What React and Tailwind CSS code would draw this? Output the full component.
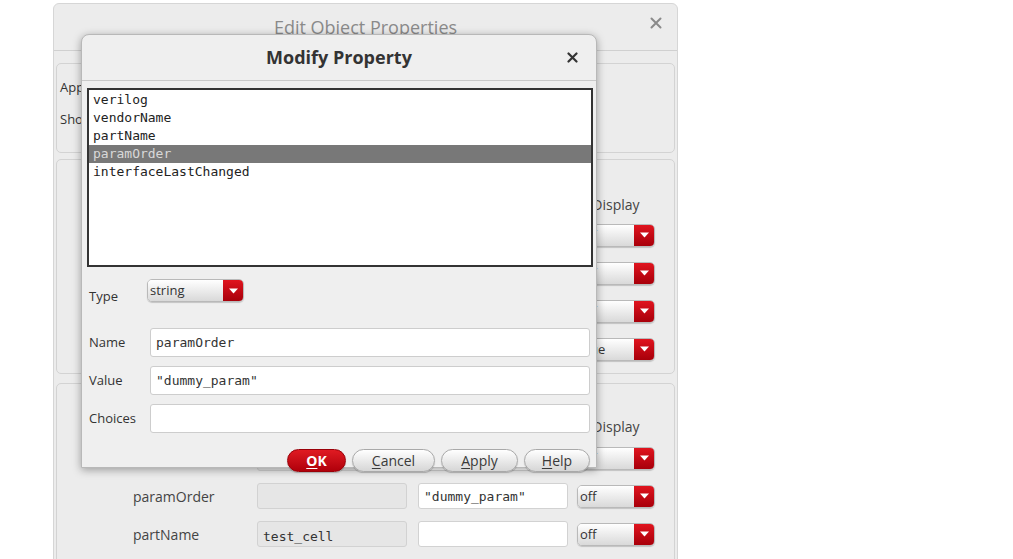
import React from "react";

const sans = "font-['Open_Sans','Noto_Sans',sans-serif]";
const mono = "font-['DejaVu_Sans_Mono',monospace]";

function Arrow() {
  return (
    <svg width="9" height="6" viewBox="0 0 9 6">
      <path d="M0 0.5h9L4.5 5.5z" fill="#fff" />
    </svg>
  );
}

function Drop({ text, width }) {
  return (
    <div
      className={`flex h-[23px] ${width} shrink-0 rounded-[5px] border border-[#b9b9b9] overflow-hidden shadow-[0_1px_1px_rgba(0,0,0,0.18)]`}
    >
      <div className={`flex-1 bg-gradient-to-b from-white to-[#d9d9d9] text-[13px] leading-[20px] pl-[2px] text-[#333] ${sans}`}>
        {text}
      </div>
      <div className="w-[20px] bg-gradient-to-b from-[#e0141e] to-[#a8000a] flex items-center justify-center">
        <Arrow />
      </div>
    </div>
  );
}

function Btn({ first, rest, width, red }) {
  return (
    <div
      className={`h-[23px] ${width} rounded-full border flex items-center justify-center text-[14px] ${sans} ${
        red
          ? "bg-gradient-to-b from-[#e01a22] to-[#b0000a] border-[#9a0008] text-white font-bold"
          : "bg-gradient-to-b from-white to-[#d6d6d6] border-[#a9a9a9] text-[#3a3a3a]"
      } shadow-[0_1px_1px_rgba(0,0,0,0.2)]`}
    >
      <span className="underline underline-offset-2">{first}</span>
      <span>{rest}</span>
    </div>
  );
}

function BgRow({ label, v1, v2, disp }) {
  return (
    <div className="flex items-center h-[38px]">
      <div className={`w-[200px] pl-[76px] text-[14px] text-[#444] ${sans}`}>{label}</div>
      <div className={`w-[150px] h-[26px] rounded-[3px] border border-[#d2d2d2] bg-[#e6e6e6] pl-[5px] text-[13px] leading-[30px] text-[#333] ${mono}`}>
        {v1}
      </div>
      <div className={`ml-[11px] w-[150px] h-[26px] rounded-[3px] border border-[#d2d2d2] bg-white pl-[5px] text-[13px] leading-[26px] text-[#333] ${mono}`}>
        {v2}
      </div>
      <div className="ml-[9px]">
        <Drop text={disp} width="w-[78px]" />
      </div>
    </div>
  );
}

function FieldRow({ label, value, mt }) {
  return (
    <div className={`flex items-center ${mt}`}>
      <div className={`w-[61px] text-[13px] text-[#333] ${sans} pt-[2px]`}>{label}</div>
      <div className={`w-[440px] h-[29px] rounded-[3px] border border-[#cdcdcd] bg-white pl-[5px] text-[13px] leading-[28px] text-[#333] ${mono}`}>
        {value}
      </div>
    </div>
  );
}

export default function App() {
  const items = ["verilog", "vendorName", "partName", "paramOrder", "interfaceLastChanged"];
  return (
    <div className="relative w-[1013px] h-[559px] bg-white overflow-hidden">
      {/* Background dialog */}
      <div className="ml-[53px] mt-[3px] w-[625px] h-[600px] bg-[#ececec] border border-[#d6d6d6] rounded-t-[6px]">
        <div className="h-[47px] flex items-center border-b border-[#d0d0d0] relative">
          <div className={`flex-1 text-center text-[18px] text-[#8a8a8a] ${sans}`}>Edit Object Properties</div>
          <div className="absolute right-[15px] top-[13px] text-[#8a8a8a]">
            <svg width="12" height="12" viewBox="0 0 12 12">
              <path d="M1.5 1.5l9 9M10.5 1.5l-9 9" stroke="#8a8a8a" strokeWidth="2" strokeLinecap="round" />
            </svg>
          </div>
        </div>
        <div className="px-[2px] pt-[12px] flex flex-col">
          <div className={`h-[90px] rounded-[5px] border border-[#d3d3d3] pl-[3px] pt-[14px] text-[13px] text-[#333] ${sans}`}>
            <div>Apply To</div>
            <div className="mt-[12px]">Show</div>
          </div>
          <div className="mt-[6px] h-[215px] rounded-[5px] border border-[#d3d3d3] pt-[34px]">
            <div className="flex h-[20px] items-center">
              <div className="w-[520px]" />
              <div className={`w-[78px] text-center text-[14px] text-[#444] ${sans}`}>Display</div>
            </div>
            <div className="mt-[2px]">
              <BgRow label="verilog" v1="" v2="" disp="off" />
              <BgRow label="vendorName" v1="" v2="" disp="off" />
              <BgRow label="partName" v1="" v2="" disp="off" />
              <BgRow label="interfaceLastChanged" v1="" v2="" disp="true" />
            </div>
          </div>
          <div className="mt-[9px] h-[200px] rounded-[5px] border border-[#d3d3d3] pt-[32px]">
            <div className="flex h-[20px] items-center">
              <div className="w-[520px]" />
              <div className={`w-[78px] text-center text-[14px] text-[#444] ${sans}`}>Display</div>
            </div>
            <div className="mt-[3px]">
              <BgRow label="interfaceLastChanged" v1="Jul 20 10:36:21 2021" v2="" disp="off" />
              <BgRow label="paramOrder" v1="" v2={'"dummy_param"'} disp="off" />
              <BgRow label="partName" v1="test_cell" v2="" disp="off" />
            </div>
          </div>
        </div>
      </div>

      {/* Modify Property dialog */}
      <div className="absolute left-[81px] top-[34px] w-[516px] h-[434px] bg-[#efefef] border border-[#b8b8b8] rounded-t-[8px] shadow-[0_2px_8px_rgba(0,0,0,0.35)] flex flex-col">
        <div className="h-[46px] shrink-0 border-b border-[#c9c9c9] flex items-center justify-center relative">
          <div className={`text-[18px] font-bold text-[#333] ${sans}`}>Modify Property</div>
          <div className="absolute right-[18px] top-[17px]">
            <svg width="11" height="11" viewBox="0 0 11 11">
              <path d="M1.5 1.5l8 8M9.5 1.5l-8 8" stroke="#333" strokeWidth="2.2" strokeLinecap="round" />
            </svg>
          </div>
        </div>
        <div className="pl-[5px] pr-[3px] pt-[7px]">
          <div className="h-[179px] border-2 border-[#333] bg-white pt-[1px]">
            {items.map((it) => (
              <div
                key={it}
                className={`h-[18px] leading-[18px] pl-[4px] text-[13px] ${mono} ${
                  it === "paramOrder" ? "bg-[#787878] text-[#d8d8d8]" : "text-[#222]"
                }`}
              >
                {it}
              </div>
            ))}
          </div>
        </div>
        <div className="pl-[7px] pr-[6px]">
          <div className="flex items-center mt-[8px]">
            <div className={`w-[58px] text-[13px] text-[#333] ${sans} pt-[12px]`}>Type</div>
            <Drop text="string" width="w-[97px]" />
          </div>
          <FieldRow label="Name" value="paramOrder" mt="mt-[21px]" />
          <FieldRow label="Value" value={'"dummy_param"'} mt="mt-[9px]" />
          <FieldRow label="Choices" value="" mt="mt-[9px]" />
          <div className="flex justify-end gap-[6px] mt-[16px] pr-[0px]">
            <Btn first="O" rest="K" width="w-[59px]" red />
            <Btn first="C" rest="ancel" width="w-[83px]" />
            <Btn first="A" rest="pply" width="w-[77px]" />
            <Btn first="H" rest="elp" width="w-[66px]" />
          </div>
        </div>
      </div>
    </div>
  );
}
